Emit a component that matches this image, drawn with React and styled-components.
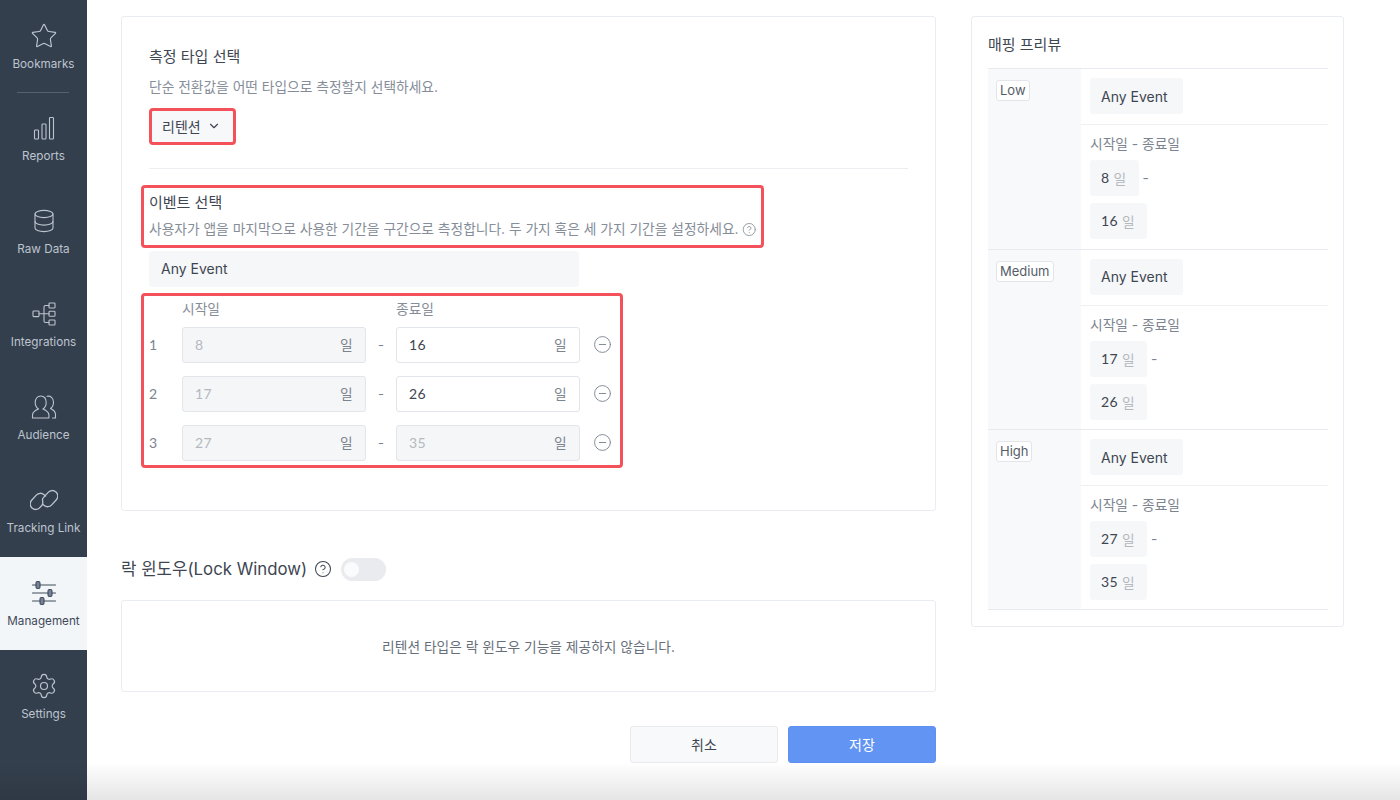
import React from "react";
import styled, { createGlobalStyle } from "styled-components";
import { Star, Settings, ChevronDown, CircleHelp, CircleMinus } from "lucide-react";

const Global = createGlobalStyle`
  html, body { margin: 0; padding: 0; background: #fff; height: 100%; }
  body { font-family: Inter, "Noto Sans CJK KR", sans-serif; color: #3e4652; }
  * { box-sizing: border-box; }
`;
const Page = styled.div`position: relative; display: flex; width: 1400px; height: 800px; overflow: hidden; background: #fff;`;
const Side = styled.nav`width: 87px; flex: none; background: #343f4d; display: flex; flex-direction: column;`;
const NavItem = styled.div`
  height: ${p => p.$h || 93}px; display: flex; flex-direction: column; align-items: center; padding-top: 22px;
  background: ${p => p.$active ? "#f3f6f9" : "transparent"};
  color: ${p => p.$active ? "#3f4a59" : "#bcc4ce"};
  font-size: 11.7px; line-height: 16px; white-space: nowrap;
  svg { display: block; margin-bottom: 6.4px; }
`;
const NavRule = styled.div`height: 1px; margin: 0 18px -1px 17px; background: #56616e; flex: none; position: relative; z-index: 1;`;
const Main = styled.main`flex: 1; display: flex; align-items: flex-start; padding: 16px 0 0 34px; gap: 35px;`;
const LeftCol = styled.div`width: 815px; flex: none;`;
const Card = styled.section`border: 1px solid #e9ecf0; border-radius: 3px; background: #fff;`;
const TypeCard = styled(Card)`height: 495px; padding: 30px 27px 0;`;
const Title = styled.h3`margin: 0; font-size: 15px; line-height: 20px; font-weight: 400; color: #3e4652;`;
const Desc = styled.p`margin: 10px 0 0; font-size: 13.75px; line-height: 20px; color: #858d98; display: flex; align-items: center; gap: 3px; white-space: nowrap;`;
const Mark = styled.div`border: 3px solid #f4525a; border-radius: 4px;`;
const SelectMark = styled(Mark)`width: 87px; height: 37px; margin-top: 11px; background: #f7f8fa; display: flex; align-items: center; padding: 0 0 1px 10px; gap: 6px; font-size: 14px; color: #3e4652;`;
const Rule = styled.hr`border: 0; height: 1px; background: #eceef1; margin: 23px 0 0; width: 759px;`;
const EventMark = styled(Mark)`width: 623px; height: 63px; margin: 16px 0 0 -8px; padding: 5px 5px 0; ${Desc} { margin-top: 6px; }`;
const EventField = styled.div`width: 430px; height: 36px; margin-top: 3px; background: #f6f7f9; border-radius: 3px; padding: 0 12px 1px; display: flex; align-items: center; font-size: 14px; color: #3e4652;`;
const GridMark = styled(Mark)`width: 482px; height: 175px; margin: 6px 0 0 -8px; padding: 3px 0 0 5px;`;
const Heads = styled.div`display: flex; height: 25px; padding-left: 33px; font-size: 13.75px; line-height: 20px; color: #858d98; span { width: 214px; }`;
const RangeRow = styled.div`display: flex; align-items: center; height: 36px; margin-top: ${p => p.$first ? 3 : 13}px;`;
const RowNo = styled.span`width: 33px; padding-bottom: 2px; font-size: 14px; color: #7c848f; font-family: Lato, "Noto Sans CJK KR", sans-serif;`;
const Field = styled.div`
  width: 184px; height: 36px; border: 1px solid #e2e5ea; border-radius: 3px; padding: 0 12px 2px; display: flex; align-items: center; justify-content: space-between;
  background: ${p => p.$off ? "#f5f6f8" : "#fff"}; color: ${p => p.$off ? "#b4b9c0" : "#3e4652"};
  font-family: Lato, "Noto Sans CJK KR", sans-serif; font-size: 14px; letter-spacing: .3px;
  em { font-style: normal; color: #7c848f; font-family: "Noto Sans CJK KR", sans-serif; font-size: 13.75px; }
`;
const Dash = styled.span`width: 30px; text-align: center; font-size: 13px; color: #7c848f;`;
const RemoveBtn = styled.span`display: flex; margin: -1px 0 0 13px; color: #7f8791;`;
const LockHead = styled.div`display: flex; align-items: center; height: 24px; margin-top: 45px; font-size: 16.8px; color: #3e4652;`;
const LockHelp = styled.span`display: flex; margin: 2px 0 0 7px; color: #3e4652;`;
const Toggle = styled.span`position: relative; width: 45px; height: 23px; margin: 2px 0 0 9px; border-radius: 12px; background: #e9ebef; &::after { content: ""; position: absolute; left: 3px; top: 4px; width: 15px; height: 15px; border-radius: 50%; background: #fafbfc; }`;
const LockCard = styled(Card)`height: 92px; margin-top: 20px; display: flex; align-items: center; justify-content: center; font-size: 13.75px; color: #676f7a;`;
const Actions = styled.div`display: flex; justify-content: flex-end; gap: 10px; margin-top: 34px;`;
const Btn = styled.button`
  width: 148px; height: 37px; padding: 0 0 2px; border-radius: 3px; font-family: inherit; font-size: 14px; font-weight: 400;
  border: 1px solid ${p => p.$primary ? "#5e92f2" : "#e8eaee"};
  background: ${p => p.$primary ? "#6295f3" : "#f8f9fb"}; color: ${p => p.$primary ? "#fff" : "#3e4652"};
`;
const Preview = styled(Card)`width: 373px; height: 611px; padding: 18px 15px 0 16px;`;
const PreviewTitle = styled(Title)`height: 33px;`;
const Mapping = styled.div`display: flex; height: 180.5px; border-top: 1px solid #e7eaee; &:last-child { height: 181px; border-bottom: 1px solid #e7eaee; }`;
const LevelCell = styled.div`width: 93px; flex: none; background: #f8f9fb; padding: 10px 8px;`;
const Tag = styled.span`display: inline-block; height: 21px; padding: 0 3px; border: 1px solid #e2e5ea; border-radius: 3px; background: #fff; font-size: 13px; line-height: 19px; color: #555d68;`;
const Detail = styled.div`flex: 1;`;
const EventPart = styled.div`height: 56px; padding: 9px 9px 0; border-bottom: 1px solid #eef0f3;`;
const Chip = styled.span`display: inline-flex; align-items: center; height: 36px; padding: 0 15px 0 11px; background: #f6f7f9; border-radius: 3px; font-size: 14px; color: #3e4652; white-space: nowrap;`;
const DatePart = styled.div`padding: 9px 9px 0; font-size: 13.75px; line-height: 20px; color: #7c848f;`;
const DayLine = styled.div`display: flex; align-items: center; margin-top: ${p => p.$first ? 6 : 7}px; gap: 4px;`;
const Day = styled(Chip)`font-family: Lato, "Noto Sans CJK KR", sans-serif; letter-spacing: .4px; gap: 4px; padding-right: 12px; em { font-style: normal; color: #b4b9c0; font-family: "Noto Sans CJK KR", sans-serif; font-size: 13.75px; }`;
const Fade = styled.div`position: absolute; left: 0; right: 0; bottom: 0; height: 38px; pointer-events: none; background: linear-gradient(to bottom, rgba(0,0,0,0), rgba(0,0,0,.1));`;

const Ico = ({ children }) => <svg width="28" height="28" viewBox="0 0 28 28" fill="none" stroke="currentColor" strokeWidth="1.1" strokeLinecap="round" strokeLinejoin="round">{children}</svg>;
const Bars = () => <Ico><rect x="4.5" y="16" width="4" height="9" rx=".8"/><rect x="12" y="10" width="4" height="15" rx=".8"/><rect x="19.5" y="3.5" width="4" height="21.5" rx=".8"/></Ico>;
const Db = () => <Ico><ellipse cx="14" cy="7" rx="9" ry="3.6"/><path d="M5 7v14c0 2 4 3.6 9 3.6s9-1.6 9-3.6V7"/><path d="M5 14.5c0 2 4 3.6 9 3.6s9-1.6 9-3.6"/></Ico>;
const Flow = () => <Ico><rect x="3" y="11" width="6" height="5.6" rx=".8"/><rect x="19" y="3" width="6" height="5" rx=".8"/><rect x="19" y="11.2" width="6" height="5" rx=".8"/><rect x="19" y="20" width="6" height="5" rx=".8"/><path d="M9 13.8h10M14 13.8V7c0-1 .6-1.5 1.5-1.5H19M14 13.8v7.200c0 1 .6 1.500 1.500 1.500H19"/></Ico>;
const People = () => <Ico><path d="M2.500 25v-3c0-3 2.500-4.600 6-6-2.500-1.600-3.300-4-3.300-6.500C5.200 5.500 7.500 3 10.700 3s5.500 2.500 5.500 6.500c0 2.500-.8 4.900-3.300 6.500 3.500 1.400 6 3 6 6v3z"/><path d="M17 3.300c3.500-.8 6.500 1.600 6.500 6 0 2.500-1 4.900-3 6.200 3 1.400 5 3 5 6V25h-3"/></Ico>;
const Chain = () => <Ico><g transform="rotate(-48 14 14)" strokeWidth="1.3"><path d="M18 12.500v-2a5.500 5.500 0 0 0-5.500-5.500h-7a5.500 5.500 0 0 0 0 11H9c3 0 3-4 6-4h7.500a5.500 5.500 0 0 1 0 11h-7a5.500 5.500 0 0 1-5.500-5.500v-2"/></g></Ico>;
const Sliders = () => <Ico><path d="M2.500 6h23M2.500 14h23M2.500 22h23"/><rect x="6" y="2.500" width="4" height="7" rx="1.500" fill="#76829b"/><rect x="18" y="10.500" width="4" height="7" rx="1.500" fill="#76829b"/><rect x="10" y="18.500" width="4" height="7" rx="1.500" fill="#76829b"/></Ico>;

const nav = [
  ["Reports", <Bars/>], ["Raw Data", <Db/>], ["Integrations", <Flow/>], ["Audience", <People/>], ["Tracking Link", <Chain/>],
];
const ranges = [["8", "16", false], ["17", "26", false], ["27", "35", true]];
const maps = [["Low", "8", "16"], ["Medium", "17", "26"], ["High", "27", "35"]];

export default function App() {
  return (
    <Page>
      <Global />
      <Side>
        <NavItem $h={92}><Star size={28} strokeWidth={1} />Bookmarks</NavItem>
        <NavRule />
        {nav.map(([t, i]) => <NavItem key={t}>{i}{t}</NavItem>)}
        <NavItem $active><Sliders />Management</NavItem>
        <NavItem><Settings size={28} strokeWidth={1} />Settings</NavItem>
      </Side>
      <Main>
        <LeftCol>
          <TypeCard>
            <Title>측정 타입 선택</Title>
            <Desc>단순 전환값을 어떤 타입으로 측정할지 선택하세요.</Desc>
            <SelectMark>리텐션<ChevronDown size={14} /></SelectMark>
            <Rule />
            <EventMark>
              <Title>이벤트 선택</Title>
              <Desc>사용자가 앱을 마지막으로 사용한 기간을 구간으로 측정합니다. 두 가지 혹은 세 가지 기간을 설정하세요.<CircleHelp size={15} strokeWidth={1.4} /></Desc>
            </EventMark>
            <EventField>Any Event</EventField>
            <GridMark>
              <Heads><span>시작일</span><span>종료일</span></Heads>
              {ranges.map(([a, b, off], i) => (
                <RangeRow key={a} $first={i === 0}>
                  <RowNo>{i + 1}</RowNo>
                  <Field $off>{a}<em>일</em></Field>
                  <Dash>-</Dash>
                  <Field $off={off}>{b}<em>일</em></Field>
                  <RemoveBtn><CircleMinus size={19} strokeWidth={1.2} /></RemoveBtn>
                </RangeRow>
              ))}
            </GridMark>
          </TypeCard>
          <LockHead>락 윈도우(Lock Window)<LockHelp><CircleHelp size={18} strokeWidth={1.4} /></LockHelp><Toggle /></LockHead>
          <LockCard>리텐션 타입은 락 윈도우 기능을 제공하지 않습니다.</LockCard>
          <Actions><Btn>취소</Btn><Btn $primary>저장</Btn></Actions>
        </LeftCol>
        <Preview>
          <PreviewTitle>매핑 프리뷰</PreviewTitle>
          {maps.map(([lvl, a, b]) => (
            <Mapping key={lvl}>
              <LevelCell><Tag>{lvl}</Tag></LevelCell>
              <Detail>
                <EventPart><Chip>Any Event</Chip></EventPart>
                <DatePart>
                  시작일 - 종료일
                  <DayLine $first><Day>{a} <em>일</em></Day>-</DayLine>
                  <DayLine><Day>{b} <em>일</em></Day></DayLine>
                </DatePart>
              </Detail>
            </Mapping>
          ))}
        </Preview>
      </Main>
      <Fade />
    </Page>
  );
}
